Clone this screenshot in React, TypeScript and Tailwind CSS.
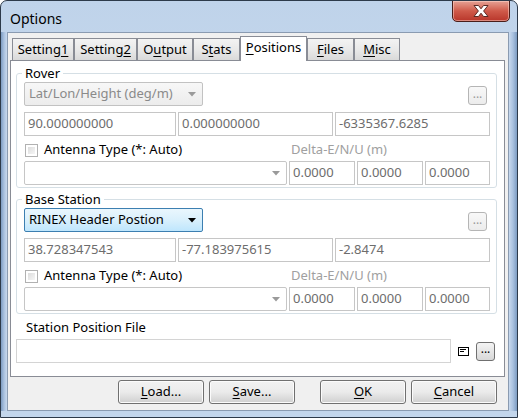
import React from "react";

function U({ children }: { children: React.ReactNode }) {
  return <span className="underline underline-offset-[2px] decoration-[1px]">{children}</span>;
}

function Arrow({ dark }: { dark?: boolean }) {
  return (
    <svg width="8" height="5" viewBox="0 0 8 5" className="shrink-0">
      <path d="M0 0 L8 0 L4 4.5 Z" fill={dark ? "#000000" : "#9a9a9a"} />
    </svg>
  );
}

function Edit({ value, w }: { value: string; w: string }) {
  return (
    <div
      className={`${w} h-[24px] shrink-0 border border-[#c6c6c6] bg-white flex items-center pl-[3px] text-[#6d6d6d] overflow-hidden whitespace-nowrap`}
    >
      {value}
    </div>
  );
}

function DisabledCombo({ text, w, white }: { text: string; w: string; white?: boolean }) {
  return (
    <div
      className={`${w} h-[24px] shrink-0 rounded-[2px] border flex items-center pl-[4px] pr-[6px] text-[#8a8a8a] whitespace-nowrap ${
        white
          ? "border-[#c6c6c6] bg-white"
          : "border-[#c2c2c2] bg-gradient-to-b from-[#f7f7f7] to-[#ececec]"
      }`}
    >
      <span className="flex-1">{text}</span>
      <Arrow />
    </div>
  );
}

function DotsButton({ enabled }: { enabled?: boolean }) {
  return (
    <div
      className={`w-[19px] h-[19px] shrink-0 rounded-[3px] border flex items-center justify-center text-[12px] leading-none pb-[4px] ${
        enabled
          ? "border-[#707070] bg-gradient-to-b from-[#f4f4f4] to-[#d8d8d8] text-black"
          : "border-[#b5b5b5] bg-gradient-to-b from-[#f8f8f8] to-[#ececec] text-[#9a9a9a]"
      }`}
    >
      ...
    </div>
  );
}

function Checkbox() {
  return (
    <div className="w-[13px] h-[13px] shrink-0 border border-[#b1b1b1] bg-white p-[2px]">
      <div className="w-full h-full bg-gradient-to-br from-[#dcdcdc] to-[#f6f6f6]" />
    </div>
  );
}

function Group({
  title,
  combo,
  values,
}: {
  title: string;
  combo: React.ReactNode;
  values: [string, string, string];
}) {
  return (
    <fieldset className="border border-[#d5dfe5] rounded-[3px] pl-[7px] pr-[6px] pt-[2px] pb-[2px] min-w-0">
      <legend className="ml-[-2px] px-[3px] leading-[16px]">{title}</legend>
      <div className="flex items-end justify-between h-[23px]">
        {combo}
        <div className="mr-[3px] mb-[1px]">
          <DotsButton />
        </div>
      </div>
      <div className="flex gap-[2px] mt-[6px]">
        <Edit value={values[0]} w="w-[152px]" />
        <Edit value={values[1]} w="w-[155px]" />
        <Edit value={values[2]} w="w-[155px]" />
      </div>
      <div className="flex items-center h-[20px] mt-[4px]">
        <div className="w-[265px] flex items-center gap-[6px] pl-[1px]">
          <Checkbox />
          <span>Antenna Type (*: Auto)</span>
        </div>
        <span className="pl-[2px] text-[#a0a0a0]">Delta-E/N/U (m)</span>
      </div>
      <div className="flex gap-[2px] mt-[1px]">
        <DisabledCombo text="" w="w-[263px]" white />
        <Edit value="0.0000" w="w-[66px]" />
        <Edit value="0.0000" w="w-[66px]" />
        <Edit value="0.0000" w="w-[65px]" />
      </div>
    </fieldset>
  );
}

function Tab({ label, w, selected }: { label: React.ReactNode; w: string; selected?: boolean }) {
  if (selected) {
    return (
      <div
        className={`${w} h-[25px] mb-[-1px] relative z-10 border border-b-0 border-[#898c95] bg-white flex items-center justify-center pb-[2px] shrink-0`}
      >
        {label}
      </div>
    );
  }
  return (
    <div
      className={`${w} h-[22px] border border-b-0 border-[#898c95] bg-gradient-to-b from-[#f3f3f3] via-[#e9e9e9] to-[#d9d9d9] flex items-center justify-center shrink-0`}
    >
      {label}
    </div>
  );
}

function Button({ children }: { children: React.ReactNode }) {
  return (
    <div className="w-[86px] h-[24px] rounded-[3px] border border-[#707070] bg-gradient-to-b from-[#f2f2f2] via-[#ebebeb] to-[#cfcfcf] shadow-[inset_0_0_0_1px_#fbfbfb] flex items-center justify-center pb-[1px]">
      {children}
    </div>
  );
}

export default function App() {
  return (
    <div className="w-[518px] h-[418px] font-['Noto_Sans',sans-serif] text-[13px] text-black">
      <div className="w-full h-full rounded-t-[7px] border border-[#2d3a4a] bg-gradient-to-b from-[#bfd3ea] via-[#cbdcef] to-[#c3d6ec] flex flex-col overflow-hidden">
        {/* Title bar */}
        <div className="h-[31px] flex items-start shrink-0">
          <div className="pl-[9px] pt-[8px] text-[14px] leading-[20px] text-black">Options</div>
          <div className="ml-auto mr-[7px] mt-[-1px] w-[58px] h-[22px] rounded-b-[5px] border border-[#4a1e1a] bg-gradient-to-b from-[#e5a195] via-[#cf5a4a] to-[#b8352a] shadow-[inset_0_0_0_1px_rgba(255,220,210,0.5)] flex items-center justify-center">
            <svg width="20" height="14" viewBox="0 0 20 14">
              <path
                d="M3 1.5 L7.5 1.5 L10 4.8 L12.5 1.5 L17 1.5 L12.6 7 L17 12.5 L12.5 12.5 L10 9.2 L7.5 12.5 L3 12.5 L7.4 7 Z"
                fill="#ffffff"
                stroke="#5a2a25"
                strokeWidth="1"
                strokeLinejoin="round"
              />
            </svg>
          </div>
        </div>
        {/* Middle */}
        <div className="flex h-[379px] shrink-0">
          <div className="w-[6px] shrink-0 bg-gradient-to-r from-[#7d9cc2] via-[#a9c1df] to-[#c8d9ee]" />
          <div className="w-[502px] shrink-0 border border-[#8a9bb1] bg-[#f0f0f0] flex flex-col pt-[3px] pl-[2px] pr-[3px]">
            {/* Tabs */}
            <div className="flex items-end h-[24px] pl-[2px]">
              <Tab w="w-[62px]" label={<span>Setting<U>1</U></span>} />
              <Tab w="w-[63px]" label={<span>Setting<U>2</U></span>} />
              <Tab w="w-[56px]" label={<span>O<U>u</U>tput</span>} />
              <Tab w="w-[47px]" label={<span>S<U>t</U>ats</span>} />
              <Tab w="w-[67px]" selected label={<span><U>P</U>ositions</span>} />
              <Tab w="w-[47px]" label={<span><U>F</U>iles</span>} />
              <Tab w="w-[46px]" label={<span><U>M</U>isc</span>} />
            </div>
            {/* Tab page */}
            <div className="h-[317px] border border-[#898c95] bg-white pl-[5px] pr-[7px] pt-[4px]">
              <Group
                title="Rover"
                combo={<DisabledCombo text="Lat/Lon/Height (deg/m)" w="w-[179px]" />}
                values={["90.000000000", "0.000000000", "-6335367.6285"]}
              />
              <div className="mt-[3px]">
                <Group
                  title="Base Station"
                  combo={
                    <div className="w-[179px] h-[24px] shrink-0 rounded-[2px] border border-[#3c7fb1] bg-gradient-to-b from-[#eaf6fd] via-[#d9f0fc] to-[#bee6fd] flex items-center pl-[4px] pr-[6px] whitespace-nowrap">
                      <span className="flex-1">RINEX Header Postion</span>
                      <Arrow dark />
                    </div>
                  }
                  values={["38.728347543", "-77.183975615", "-2.8474"]}
                />
              </div>
              <div className="pl-[10px] mt-[4px] leading-[18px]">Station Position File</div>
              <div className="flex items-center mt-[3px]">
                <div className="w-[435px] h-[24px] border border-[#d4d4d4] bg-white" />
                <div className="ml-[7px] w-[11px] h-[9px] border border-black flex flex-col gap-[1px] pt-[1px] pl-[1px]">
                  <div className="w-[6px] h-[1px] bg-black" />
                  <div className="w-[4px] h-[1px] bg-black" />
                </div>
                <div className="ml-[7px]">
                  <DotsButton enabled />
                </div>
              </div>
            </div>
            {/* Buttons */}
            <div className="flex justify-end mt-[3px] pr-[8px] gap-[5px]">
              <Button><span><U>L</U>oad...</span></Button>
              <Button><span><U>S</U>ave...</span></Button>
              <div className="w-[15px]" />
              <Button><span><U>O</U>K</span></Button>
              <Button><span><U>C</U>ancel</span></Button>
            </div>
          </div>
          <div className="flex-1 bg-gradient-to-l from-[#7d9cc2] via-[#a9c1df] to-[#c8d9ee]" />
        </div>
        <div className="flex-1 bg-[#c3d6ec]" />
      </div>
    </div>
  );
}
